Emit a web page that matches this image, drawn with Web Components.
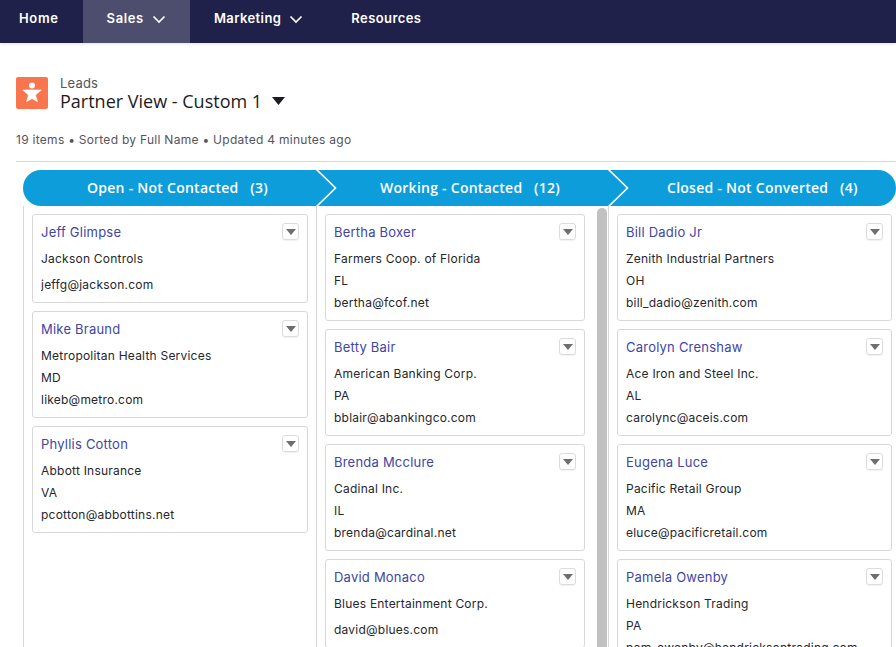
<!DOCTYPE html>
<html>
<head>
<meta charset="utf-8">
<title>Leads</title>
<style>
  html, body { margin: 0; height: 647px; overflow: hidden; background: #fff; }
  body { display: flex; flex-direction: column; font-family: "Inter", "Liberation Sans", sans-serif; }
</style>
</head>
<body>
<top-nav>
  <nav-item>Home</nav-item>
  <nav-item active menu>Sales</nav-item>
  <nav-item menu>Marketing</nav-item>
  <nav-item>Resources</nav-item>
</top-nav>

<list-header object="Leads" view="Partner View - Custom 1" meta="19 items • Sorted by Full Name • Updated 4 minutes ago"></list-header>

<kanban-board>
  <kanban-stage slot="stages" label="Open - Not Contacted" count="3" first style="--text-left: 64px"></kanban-stage>
  <kanban-stage slot="stages" label="Working - Contacted" count="12" style="--text-left: 64px"></kanban-stage>
  <kanban-stage slot="stages" label="Closed - Not Converted" count="4" last style="--text-left: 59px"></kanban-stage>

  <kanban-column slot="columns" style="--pad-right: 8px">
    <lead-card name="Jeff Glimpse" company="Jackson Controls" email="jeffg@jackson.com"></lead-card>
    <lead-card name="Mike Braund" company="Metropolitan Health Services" state="MD" email="likeb@metro.com"></lead-card>
    <lead-card name="Phyllis Cotton" company="Abbott Insurance" state="VA" email="pcotton@abbottins.net"></lead-card>
  </kanban-column>
  <kanban-column slot="columns" scroll>
    <lead-card name="Bertha Boxer" company="Farmers Coop. of Florida" state="FL" email="bertha@fcof.net"></lead-card>
    <lead-card name="Betty Bair" company="American Banking Corp." state="PA" email="bblair@abankingco.com"></lead-card>
    <lead-card name="Brenda Mcclure" company="Cadinal Inc." state="IL" email="brenda@cardinal.net"></lead-card>
    <lead-card name="David Monaco" company="Blues Entertainment Corp." email="david@blues.com"></lead-card>
  </kanban-column>
  <kanban-column slot="columns" style="--pad-right: 4px">
    <lead-card name="Bill Dadio Jr" company="Zenith Industrial Partners" state="OH" email="bill_dadio@zenith.com"></lead-card>
    <lead-card name="Carolyn Crenshaw" company="Ace Iron and Steel Inc." state="AL" email="carolync@aceis.com"></lead-card>
    <lead-card name="Eugena Luce" company="Pacific Retail Group" state="MA" email="eluce@pacificretail.com"></lead-card>
    <lead-card name="Pamela Owenby" company="Hendrickson Trading" state="PA" email="pam_owenby@hendricksontrading.com"></lead-card>
  </kanban-column>
</kanban-board>

<script>
/**
 * Top navigation
 **/
class TopNav extends HTMLElement {
  constructor() {
    super();
    this.attachShadow({ mode: "open" }).innerHTML = `
      <style>
        :host {
          display: flex;
          flex: none;
          height: 43px;
          background: #20214a;
          box-shadow: 0 1px 3px rgba(0, 0, 0, 0.12);
        }
      </style>
      <slot></slot>
    `;
  }
}

class NavItem extends HTMLElement {
  constructor() {
    super();
    const chevron = this.hasAttribute("menu")
      ? `<svg width="14" height="9" viewBox="0 0 14 9"><path d="M1.5 1.5 7 7l5.5-5.5" fill="none" stroke="#fff" stroke-width="1.7"/></svg>`
      : "";
    this.attachShadow({ mode: "open" }).innerHTML = `
      <style>
        :host {
          display: flex;
          align-items: center;
          gap: 8px;
          padding: 0 24px 7px;
          color: #fff;
          font: 600 13px "Inter", "Liberation Sans", sans-serif;
          letter-spacing: 0.42px;
        }
        :host(:first-child) { padding-left: 19px; letter-spacing: 0.65px; }
        :host([active]) { background: #4d4e6e; letter-spacing: 0.62px; }
        svg { margin-top: 3px; }
      </style>
      <slot></slot>${chevron}
    `;
  }
}

/**
 * Page title block
 **/
class ListHeader extends HTMLElement {
  constructor() {
    super();
    this.attachShadow({ mode: "open" }).innerHTML = `
      <style>
        :host {
          display: block;
          flex: none;
          margin-left: 16px;
          padding-top: 34px;
          height: 84px;
          border-bottom: 1px solid #d8d8d8;
        }
        .title-row { display: flex; align-items: flex-start; gap: 12px; height: 32px; }
        .icon { width: 32px; height: 32px; border-radius: 2px; background: #f9754e; }
        .titles { margin-top: -1px; }
        .object {
          font: 13px/14px "Inter", "Liberation Sans", sans-serif;
          letter-spacing: 0.2px;
          color: #54545c;
        }
        .view {
          display: flex;
          align-items: center;
          gap: 10px;
          font: 18px/22px "Open Sans", "Liberation Sans", sans-serif;
          color: #1c1c22;
        }
        .meta {
          margin-top: 23px;
          font: 12px/16px "Inter", "Liberation Sans", sans-serif;
          letter-spacing: 0.28px;
          color: #54545c;
        }
      </style>
      <div class="title-row">
        <svg class="icon" viewBox="0 0 32 32">
          <circle cx="16" cy="8.6" r="3" fill="#fff"/>
          <path d="M6.7 13h18.6l-5.8 5 2 6.7-5.5-3.2-5.5 3.2 2-6.7z" fill="#fff" stroke="#fff" stroke-width=".6" stroke-linejoin="round"/>
        </svg>
        <div class="titles">
          <div class="object"></div>
          <div class="view"><span class="view-name"></span>
            <svg width="13" height="8" viewBox="0 0 13 8"><path d="M0 0h13L6.5 8z" fill="#1c1c22"/></svg>
          </div>
        </div>
      </div>
      <div class="meta"></div>
    `;
    this.shadowRoot.querySelector(".object").textContent = this.getAttribute("object");
    this.shadowRoot.querySelector(".view-name").textContent = this.getAttribute("view");
    this.shadowRoot.querySelector(".meta").textContent = this.getAttribute("meta");
  }
}

/**
 * Kanban board
 **/
class KanbanBoard extends HTMLElement {
  constructor() {
    super();
    this.attachShadow({ mode: "open" }).innerHTML = `
      <style>
        :host {
          display: flex;
          flex-direction: column;
          flex: 1;
          min-height: 0;
          margin: 8px 0 0 23px;
          overflow: hidden;
        }
        .stages { display: grid; grid-template-columns: 293px 292px 288px; height: 36px; flex: none; }
        .columns { display: grid; grid-template-columns: 293px 292px 288px; flex: 1; min-height: 0; }
      </style>
      <div class="stages"><slot name="stages"></slot></div>
      <div class="columns"><slot name="columns"></slot></div>
    `;
  }
}

class KanbanStage extends HTMLElement {
  constructor() {
    super();
    const arrow = this.hasAttribute("last")
      ? ""
      : `<svg width="24" height="36" viewBox="0 0 24 36"><path d="M3 -1 22.5 18 3 37" fill="none" stroke="#fff" stroke-width="1.6"/></svg>`;
    this.attachShadow({ mode: "open" }).innerHTML = `
      <style>
        :host {
          display: flex;
          align-items: center;
          position: relative;
          padding: 0 0 2px var(--text-left);
          background: #0d9dda;
          color: #fff;
          font: 600 14px "Open Sans", "Liberation Sans", sans-serif;
          letter-spacing: 0.26px;
          white-space: pre;
        }
        :host([first]) { border-radius: 18px 0 0 18px; }
        :host([last]) { border-radius: 0 18px 18px 0; }
        svg { position: absolute; right: -21px; top: 0; z-index: 1; }
      </style>
      <span class="label"></span>${arrow}
    `;
    this.shadowRoot.querySelector(".label").textContent =
      `${this.getAttribute("label")}   (${this.getAttribute("count")})`;
  }
}

class KanbanColumn extends HTMLElement {
  constructor() {
    super();
    const bar = this.hasAttribute("scroll") ? `<div class="bar"></div>` : "";
    this.attachShadow({ mode: "open" }).innerHTML = `
      <style>
        :host {
          display: flex;
          min-height: 0;
          overflow: hidden;
          border-left: 1px solid #d8d8d8;
          padding: 8px var(--pad-right, 0) 0 8px;
        }
        .cards { flex: 1; min-width: 0; display: flex; flex-direction: column; gap: 8px; }
        .bar {
          flex: none;
          width: 10px;
          margin: -6px 1px 0 12px;
          border-radius: 5px 5px 0 0;
          background: #c1c1c1;
        }
      </style>
      <div class="cards"><slot></slot></div>${bar}
    `;
  }
}

class LeadCard extends HTMLElement {
  constructor() {
    super();
    this.attachShadow({ mode: "open" }).innerHTML = `
      <style>
        :host {
          display: block;
          flex: none;
          box-sizing: border-box;
          padding: 7px 8px;
          border: 1px solid #d8d8d8;
          border-radius: 3px;
          background: #fff;
          font: 12px/22px "Inter", "Liberation Sans", sans-serif;
          letter-spacing: 0.22px;
          color: #26262b;
        }
        .head { display: flex; justify-content: space-between; height: 20px; margin-bottom: 5px; }
        .name { font-size: 13px; line-height: 20px; color: #4245a3; }
        .menu {
          box-sizing: border-box;
          display: flex;
          align-items: center;
          justify-content: center;
          width: 17px;
          height: 17px;
          margin-top: 1px;
          border: 1px solid #dcdcdc;
          border-radius: 3px;
          box-shadow: 0 1px 1px rgba(0, 0, 0, 0.06);
        }
        .line { white-space: nowrap; overflow: hidden; position: relative; top: 1px; }
        .state:empty { height: 4px; }
      </style>
      <div class="head">
        <span class="name"></span>
        <span class="menu"><svg width="10" height="6" viewBox="0 0 10 6"><path d="M0 0h10L5 6z" fill="#706e6b"/></svg></span>
      </div>
      <div class="line company"></div>
      <div class="line state"></div>
      <div class="line email"></div>
    `;
    for (const key of ["name", "company", "state", "email"]) {
      this.shadowRoot.querySelector("." + key).textContent = this.getAttribute(key) || "";
    }
  }
}

customElements.define("top-nav", TopNav);
customElements.define("nav-item", NavItem);
customElements.define("list-header", ListHeader);
customElements.define("kanban-board", KanbanBoard);
customElements.define("kanban-stage", KanbanStage);
customElements.define("kanban-column", KanbanColumn);
customElements.define("lead-card", LeadCard);
</script>
</body>
</html>
